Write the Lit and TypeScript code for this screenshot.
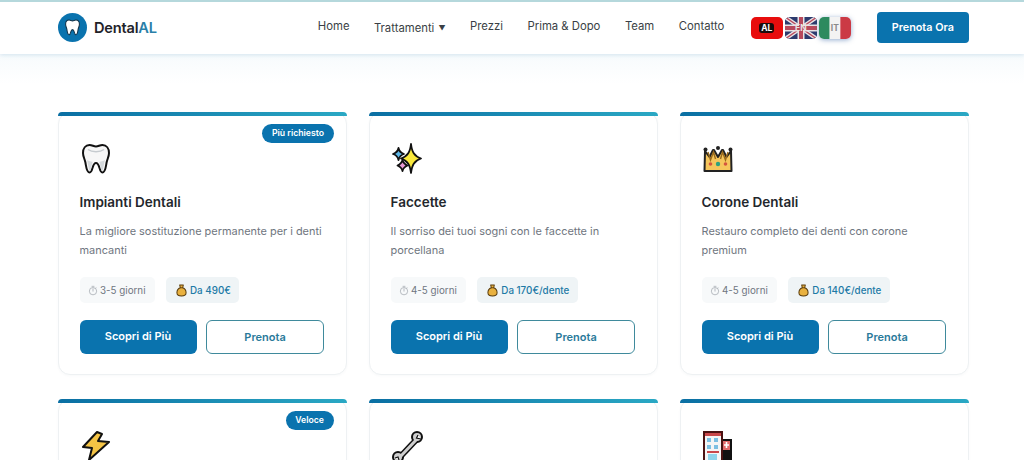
import { LitElement, html, css, svg } from "lit";
import { customElement } from "lit/decorators.js";

const toothPath = "M9.5 2C5.5 2 3 5.500 3 10c0 3.500 1.500 5.500 2.300 9 .8 3.500 1 10.500 4.400 10.500 3.300 0 2.300-9.500 6.300-9.500s3 9.500 6.300 9.500c3.400 0 3.600-7 4.400-10.500C27.500 15.500 29 13.500 29 10c0-4.500-2.500-8-6.500-8-2.800 0-4 1.500-6.500 1.500S12.300 2 9.500 2Z";

const icons: Record<string, unknown> = {
  tooth: svg`<svg class="ic" viewBox="0 0 32 32"><path d=${toothPath} fill="#f7f7f7" stroke="#111" stroke-width="2"/><path d="M7 17c1 3 1.500 9 2.700 11 1.800 0 1.500-6 3-9-2-.5-4-1-5.700-2ZM25 17c-1 3-1.500 9-2.700 11-1.800 0-1.500-6-3-9 2-.5 4-1 5.700-2Z" fill="#d5d9dc"/><path d="M8 6.500c4 3 12 3 16 0" fill="none" stroke="#c6cbcf" stroke-width="1.400"/></svg>`,
  sparkle: svg`<svg class="ic" viewBox="0 0 32 32"><path d="M20 1c1 8 3 12 10 14.500-7 2.500-9 6.500-10 14.500-1-8-3-12-10-14.500C17 13 19 9 20 1Z" fill="#f9e83c" stroke="#111" stroke-width="1.800" stroke-linejoin="round"/><path d="M7.500 5c.7 3.500 2 4.800 5.500 6-3.500 1.200-4.800 2.500-5.500 6-.7-3.500-2-4.800-5.500-6 3.500-1.200 4.800-2.500 5.500-6Z" fill="#5db7e8" stroke="#111" stroke-width="1.800" stroke-linejoin="round"/><path d="M11.500 17c.7 3 1.500 4 5 5.500-3.500 1.500-4.300 2.500-5 5.500-.7-3-1.500-4-5-5.500 3.500-1.500 4.300-2.500 5-5.500Z" fill="#e79ad6" stroke="#111" stroke-width="1.800" stroke-linejoin="round"/></svg>`,
  crown: svg`<svg class="ic" viewBox="0 0 32 32"><path d="M3 8l4.500 6L11 7h1l4 7 4-7h1l3.500 7L29 8l.5 20h-27Z" fill="#f6c65c" stroke="#222" stroke-width="2" stroke-linejoin="round"/><circle cx="3.500" cy="6.500" r="2" fill="#222"/><circle cx="16" cy="5" r="2" fill="#222"/><circle cx="28.500" cy="6.500" r="2" fill="#222"/><path d="M6 9l2.500 8 3-8 2 7M26 9l-2.500 8-3-8-2 7" fill="none" stroke="#9a6a1c" stroke-width="1.400"/><circle cx="8.500" cy="21" r="1.800" fill="#d4553f"/><circle cx="16" cy="21" r="2.200" fill="#2fa27f"/><circle cx="23.500" cy="21" r="1.800" fill="#d4553f"/></svg>`,
  bolt: svg`<svg class="ic" viewBox="0 0 32 32"><path d="M17 2 3 17l9 1-3 12 20-18-11-1 4-7Z" fill="#f5c445" stroke="#111" stroke-width="2" stroke-linejoin="round"/></svg>`,
  wrench: svg`<svg class="ic" viewBox="0 0 32 32"><path d="M9 27 26 9" stroke="#111" stroke-width="6" stroke-linecap="round"/><circle cx="26" cy="7" r="5" fill="#cfcfcf" stroke="#111" stroke-width="2"/><circle cx="7" cy="27" r="5" fill="#cfcfcf" stroke="#111" stroke-width="2"/><path d="M9 27 26 9" stroke="#cfcfcf" stroke-width="3" stroke-linecap="round"/><path d="M27 5l-1.500 3 4.500 1" fill="#fff" stroke="#111" stroke-width="1.200"/><path d="M4 28l3-1 1 3" fill="#fff" stroke="#111" stroke-width="1.200"/></svg>`,
  hospital: svg`<svg class="ic" viewBox="0 0 32 32"><rect x="19" y="9" width="11" height="23" fill="#111"/><rect x="21" y="11" width="7" height="9" fill="#e26a6a"/><path d="M24.500 12v6M22 15h5" stroke="#fff" stroke-width="1.600"/><rect x="2" y="2" width="18" height="30" fill="#f5f5f5" stroke="#4a1212" stroke-width="2"/><rect x="3" y="3" width="16" height="3" fill="#c9474a"/><rect x="5" y="8" width="4" height="4" fill="#7cbfe2"/><rect x="12" y="8" width="4" height="4" fill="#7cbfe2"/><rect x="5" y="15" width="4" height="4" fill="#7cbfe2"/><rect x="12" y="15" width="4" height="4" fill="#7cbfe2"/><rect x="5" y="21" width="12" height="2" fill="#c9474a"/><rect x="6" y="24" width="9" height="8" fill="#8fd3ea"/></svg>`,
};

const pouch = svg`<svg class="coin" viewBox="0 0 12 14"><path d="M4 1h4L7.300 4C10 5 11 7.500 11 9.500 11 12 9 13 6 13S1 12 1 9.500C1 7.500 2 5 4.700 4Z" fill="#e9b13f" stroke="#5a3d0c" stroke-width="1.100" stroke-linejoin="round"/><path d="M4.500 4h3" stroke="#5a3d0c" stroke-width="1"/></svg>`;

const clock = svg`<svg class="clk" viewBox="0 0 12 12"><circle cx="6" cy="6.800" r="4.400" fill="none" stroke="#a2a8ae" stroke-width=".9"/><path d="M6 6.800V4M4.800 1h2.400M9.500 2.800l-.7.700" fill="none" stroke="#a2a8ae" stroke-width=".9" stroke-linecap="round"/></svg>`;

interface Card { icon: string; title: string; desc?: [string, string?]; time?: string; price?: string; badge?: string }

const cards: Card[] = [
  { icon: "tooth", title: "Impianti Dentali", desc: ["La migliore sostituzione permanente per i denti", "mancanti"], time: "3-5 giorni", price: "Da 490€", badge: "Più richiesto" },
  { icon: "sparkle", title: "Faccette", desc: ["Il sorriso dei tuoi sogni con le faccette in", "porcellana"], time: "4-5 giorni", price: "Da 170€/dente" },
  { icon: "crown", title: "Corone Dentali", desc: ["Restauro completo dei denti con corone", "premium"], time: "4-5 giorni", price: "Da 140€/dente" },
  { icon: "bolt", title: "", badge: "Veloce" },
  { icon: "wrench", title: "" },
  { icon: "hospital", title: "" },
];

@customElement("app-root")
export class AppRoot extends LitElement {
  static styles = css`
    :host { display: block; height: 460px; overflow: hidden; background: #fff; font-family: Inter, "Liberation Sans", sans-serif; color: #1f2329; }
    .header { height: 52px; border-top: 2px solid #b5d8dc; background: #fff; display: flex; align-items: center; padding: 0 55px 0 58px; box-shadow: 0 1px 4px rgba(120,170,200,.28); position: relative; }
    .logo { display: flex; align-items: center; gap: 7px; font-size: 14.600px; font-weight: 600; letter-spacing: -.2px; margin-right: 161px; flex-shrink: 0; margin-top: -1px; }
    .logo b { font-weight: 600; color: #2a7fa8; }
    .mark { width: 29px; height: 29px; border-radius: 50%; background: #0a73ae; display: flex; align-items: center; justify-content: center; }
    .mark svg { width: 17px; height: 19px; }
    .nav { display: flex; gap: 24.500px; font-size: 11.300px; color: #3a3f45; font-weight: 400; align-items: center; margin-top: -5px; white-space: nowrap; flex-shrink: 0; }
    .nav .drop { margin-top: 4px; }
    .arrow { font-size: 7px; margin-left: 1px; vertical-align: 1px; }
    .flags { display: flex; align-items: center; gap: 2px; margin-left: 26.500px; margin-top: -1px; flex-shrink: 0; }
    .flag { width: 32px; height: 22px; border-radius: 5px; display: flex; align-items: center; justify-content: center; font-size: 8.500px; font-weight: 700; position: relative; overflow: hidden; }
    .flag span { position: relative; }
    .al { background: #e80d0d; color: #fff; }
    .al span { background: #1b0c0c; padding: 0 2px; border-radius: 3px; line-height: 10px; }
    .en { background: #2d3b6e; color: #e8e4e4; }
    .en svg, .it svg { position: absolute; inset: 0; width: 100%; height: 100%; }
    .it { color: #8a8a8a; box-shadow: 0 1px 5px rgba(40,90,160,.5); }
    .cta { margin-left: 26px; flex-shrink: 0; width: 92px; height: 31px; margin-top: -2px; border-radius: 4px; background: #0a73ae; color: #fff; font-size: 10.800px; font-weight: 600; display: flex; align-items: center; justify-content: center; }
    .grid { display: grid; grid-template-columns: repeat(3, 288.500px); column-gap: 22.500px; row-gap: 24px; padding: 58px 0 0 58px; background: linear-gradient(#f7fbfd, #fff 30px); }
    .card { height: 263px; box-sizing: border-box; border: 1px solid #eef1f3; border-radius: 12px; padding: 30px 21.500px 0 20.500px; position: relative; background: #fff; box-shadow: 0 1px 3px rgba(30,60,90,.03); }
    .bar { position: absolute; left: -1px; right: -1px; top: -1px; height: 4px; border-radius: 12px 12px 0 0; background: linear-gradient(90deg, #0a6fa3, #2aa8c4); }
    .badge { position: absolute; right: 12px; top: 11px; height: 19px; padding: 0 9.500px; border-radius: 10px; background: #0a73ae; color: #fff; font-size: 8.700px; font-weight: 600; line-height: 19px; }
    .ic { display: block; width: 32px; height: 32px; }
    .title { margin: 17px 0 0; height: 20px; line-height: 20px; font-size: 13.500px; font-weight: 600; color: #23272c; }
    .desc { margin: 10px 0 0; font-size: 10.950px; line-height: 19px; color: #6f7680; height: 38px; white-space: nowrap; }
    .chips { display: flex; gap: 11px; margin-top: 17px; }
    .chip { height: 26px; border-radius: 5px; display: flex; align-items: center; font-size: 9.800px; white-space: nowrap; }
    .time { background: #f7f9fa; color: #6f7680; padding: 0 9.500px 0 8px; gap: 2.500px; }
    .price { background: #eff4f6; color: #1d7aa6; font-weight: 500; padding: 0 8.500px 0 10px; gap: 3px; }
    .clk { width: 10px; height: 11px; }
    .coin { width: 11px; height: 13px; }
    .btns { display: flex; gap: 9.500px; margin-top: 17px; }
    .btn { height: 34px; box-sizing: border-box; border-radius: 6px; display: flex; align-items: center; justify-content: center; font-size: 11px; font-weight: 600; }
    .pri { width: 117px; background: #0a73ae; color: #fff; padding-bottom: 2px; }
    .sec { flex: 1; background: #fff; border: 1px solid #3f8a9c; color: #2a7a9a; }
  `;

  private flagUk() {
    return svg`<svg viewBox="0 0 32 22" preserveAspectRatio="none"><rect width="32" height="22" fill="#2d3b6e"/><path d="M0 0 32 22M32 0 0 22" stroke="#e8e4e6" stroke-width="4"/><path d="M0 0 32 22M32 0 0 22" stroke="#b8495c" stroke-width="1.400"/><path d="M16 0v22M0 11h32" stroke="#e8e4e6" stroke-width="7"/><path d="M16 0v22M0 11h32" stroke="#b8495c" stroke-width="4"/></svg>`;
  }

  private flagIt() {
    return svg`<svg viewBox="0 0 3 1" preserveAspectRatio="none"><rect width="1" height="1" fill="#2d8a5f"/><rect x="1" width="1" height="1" fill="#f3f3f3"/><rect x="2" width="1" height="1" fill="#cb3a45"/></svg>`;
  }

  private card(c: Card) {
    return html`<article class="card">
      <div class="bar"></div>
      ${c.badge ? html`<div class="badge">${c.badge}</div>` : ""}
      ${icons[c.icon]}
      ${c.title ? html`
        <h3 class="title">${c.title}</h3>
        <p class="desc">${c.desc?.[0]}<br />${c.desc?.[1]}</p>
        <div class="chips">
          <div class="chip time">${clock}${c.time}</div>
          <div class="chip price">${pouch}${c.price}</div>
        </div>
        <div class="btns">
          <div class="btn pri">Scopri di Più</div>
          <div class="btn sec">Prenota</div>
        </div>` : ""}
    </article>`;
  }

  render() {
    return html`
      <header class="header">
        <div class="logo">
          <div class="mark"><svg viewBox="0 0 32 32"><path d=${toothPath} fill="#fff" stroke="#12334a" stroke-width="2"/></svg></div>
          <div>Dental<b>AL</b></div>
        </div>
        <nav class="nav">
          <span>Home</span>
          <span class="drop">Trattamenti <span class="arrow">▼</span></span>
          <span>Prezzi</span>
          <span>Prima &amp; Dopo</span>
          <span>Team</span>
          <span>Contatto</span>
        </nav>
        <div class="flags">
          <div class="flag al"><span>AL</span></div>
          <div class="flag en">${this.flagUk()}<span>EN</span></div>
          <div class="flag it">${this.flagIt()}<span>IT</span></div>
        </div>
        <div class="cta">Prenota Ora</div>
      </header>
      <main class="grid">${cards.map((c) => this.card(c))}</main>
    `;
  }
}
